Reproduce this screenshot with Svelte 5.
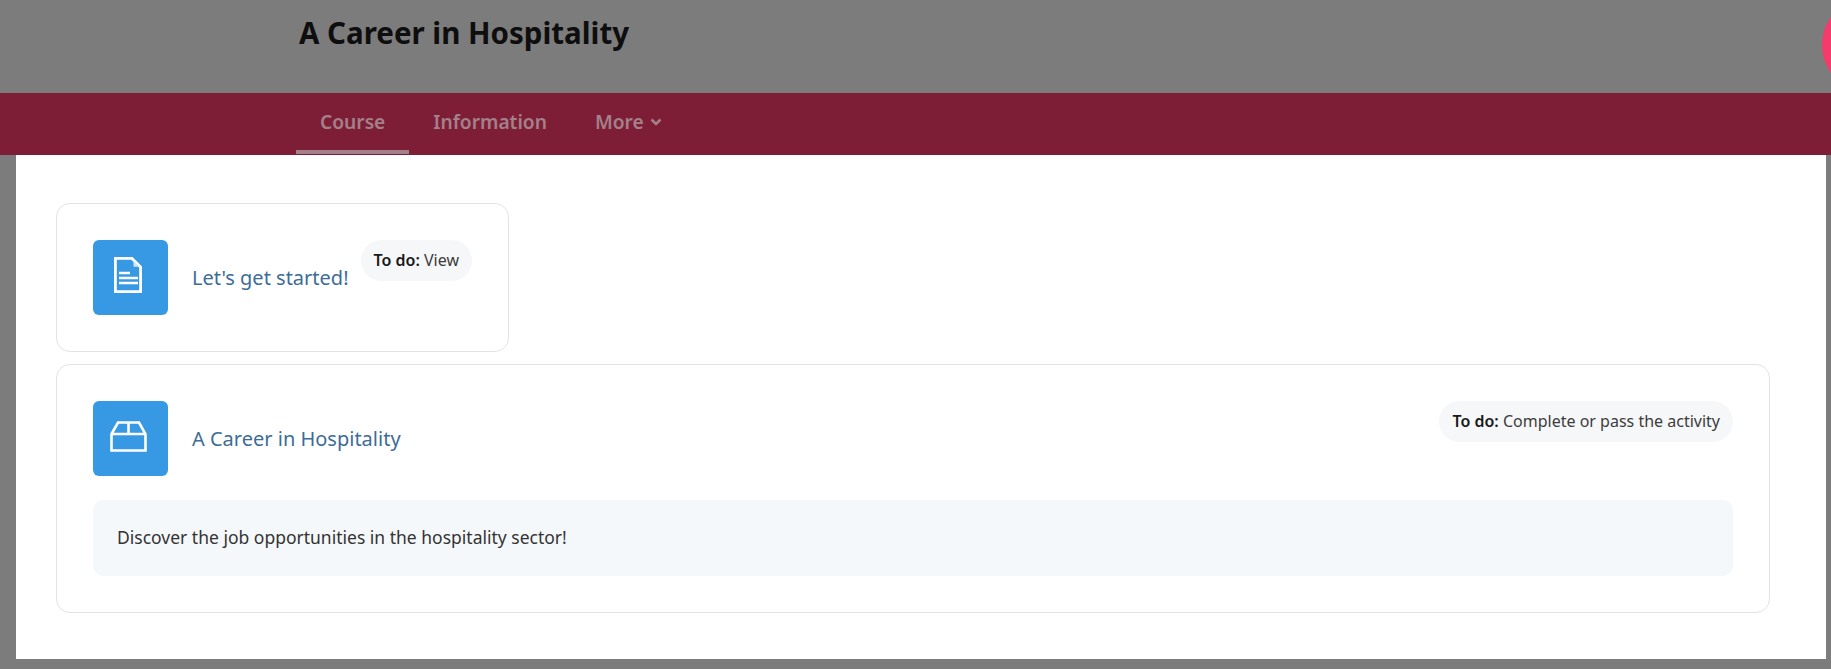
<script>
  const navItems = [
    { label: 'Course', active: true },
    { label: 'Information' },
    { label: 'More', caret: true },
  ];
</script>

<div class="page">
  <header class="course-header">
    <h1>A Career in Hospitality</h1>
    <span class="avatar"></span>
  </header>

  <nav class="course-nav">
    {#each navItems as item}
      <span class="nav-item" class:active={item.active}>
        {item.label}
        {#if item.caret}
          <svg class="caret" viewBox="0 0 14 14" width="14" height="14"><path d="M2.500 4.500 7 9l4.500-4.500" fill="none" stroke="currentColor" stroke-width="2.600"/></svg>
        {/if}
      </span>
    {/each}
  </nav>

  <main class="content">
    <section class="card small">
      <div class="activity">
        <div class="icon">
          <svg viewBox="0 0 28 36" width="28" height="36" fill="none" stroke="#fff" stroke-width="2.800">
            <path d="M1.400 1.400H18L26.600 10V34.600H1.400Z"/>
            <path d="M19.500 3.500 25 9.800H19.500Z" fill="#d5e3ee" stroke="none"/>
            <path d="M5 16h11M5 21h19M5 26h19" stroke-width="2.400"/>
          </svg>
        </div>
        <a class="name" href="#top">Let's get started!</a>
        <div class="todo"><b>To do:</b> View</div>
      </div>
    </section>

    <section class="card">
      <div class="activity">
        <div class="icon">
          <svg viewBox="0 0 37 31" width="37" height="31" fill="none" stroke="#fff" stroke-width="2.600">
            <path d="M1.500 13 8 1.500H29L35.500 13V29.500H1.500ZM1.500 13H35.500M18.500 1.500V13"/>
          </svg>
        </div>
        <a class="name" href="#top">A Career in Hospitality</a>
        <div class="todo"><b>To do:</b> Complete or pass the activity</div>
      </div>
      <div class="description">Discover the job opportunities in the hospitality sector!</div>
    </section>
  </main>
</div>

<style>
  :global(body) {
    background: #7c7c7c;
    overflow: hidden;
  }

  .page {
    font-family: "Noto Sans", "Open Sans", sans-serif;
    height: 669px;
    overflow: hidden;
  }

  .course-header {
    position: relative;
    height: 93px;
    padding-left: 299px;
    box-sizing: border-box;
  }

  h1 {
    margin: 0;
    padding-top: 13px;
    font-size: 29.500px;
    font-weight: 700;
    line-height: 40px;
    color: #0e0e0e;
  }

  /* only the edge of it shows, cut off by the window */
  .avatar {
    position: absolute;
    left: 1822px;
    top: -3px;
    width: 96px;
    height: 96px;
    border-radius: 50%;
    background: #f43b6b;
  }

  .course-nav {
    height: 62px;
    padding-left: 296px;
    display: flex;
    background: #7e1e36;
  }

  .nav-item {
    display: flex;
    align-items: center;
    gap: 5px;
    height: 57px;
    padding: 0 24px;
    font-size: 19.200px;
    font-weight: 600;
    color: #a4808a;
    border-bottom: 4px solid transparent;
  }

  .nav-item.active {
    border-bottom-color: #a4808a;
  }

  .caret {
    margin-top: 1px;
  }

  .content {
    margin: 0 5px 0 16px;
    height: 504px;
    padding: 48px 56px 0 40px;
    box-sizing: border-box;
    background: #fff;
    display: flex;
    flex-direction: column;
    gap: 12px;
    align-items: stretch;
  }

  .card {
    border: 1px solid #e2e3e5;
    border-radius: 14px;
    padding: 36px;
  }

  .card.small {
    width: 453px;
    height: 149px;
    box-sizing: border-box;
  }

  .activity {
    display: flex;
    align-items: flex-start;
  }

  .icon {
    flex: none;
    width: 75px;
    height: 75px;
    padding: 0 5px 5px 0;
    border-radius: 6px;
    background: #3799e3;
    display: flex;
    align-items: center;
    justify-content: center;
    box-sizing: border-box;
  }

  .name {
    flex: none;
    margin-left: 24px;
    margin-top: 23px;
    font-size: 20px;
    line-height: 30px;
    color: #3d6c97;
    text-decoration: none;
    white-space: nowrap;
  }

  .todo {
    margin-left: auto;
    height: 41px;
    padding: 0 13px;
    border-radius: 21px;
    background: #f6f7f8;
    font-size: 16px;
    line-height: 40px;
    color: #3c3c3c;
    white-space: nowrap;
  }

  .todo b {
    font-weight: 600;
    color: #1a1a1a;
  }

  .description {
    margin-top: 24px;
    height: 76px;
    padding: 0 24px;
    border-radius: 10px;
    background: #f5f8fa;
    font-size: 17.500px;
    line-height: 74px;
    color: #333;
  }
</style>
